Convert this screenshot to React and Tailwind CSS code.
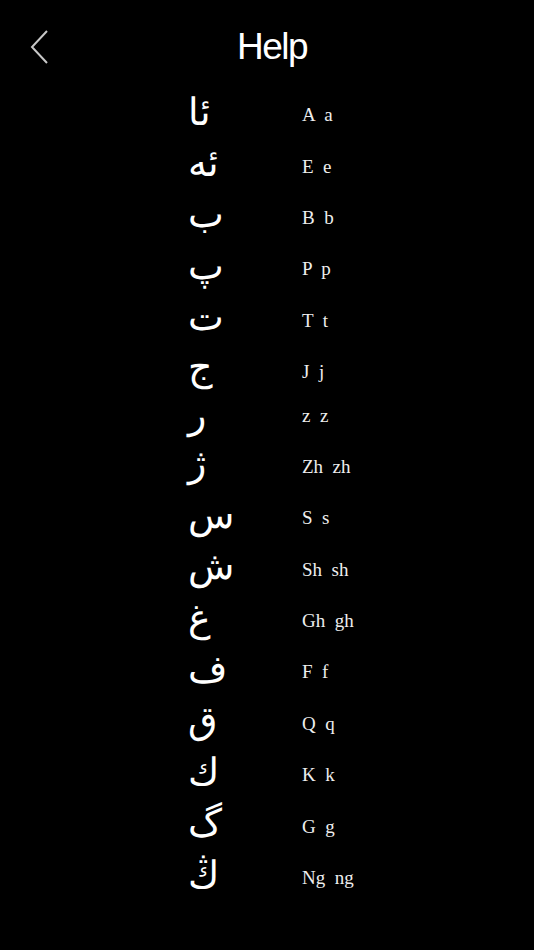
import React from 'react';

const letters = [
  { ug: 'ئا', lat: 'A  a' },
  { ug: 'ئە', lat: 'E  e' },
  { ug: 'ب', lat: 'B  b' },
  { ug: 'پ', lat: 'P  p' },
  { ug: 'ت', lat: 'T  t' },
  { ug: 'ج', lat: 'J  j', lift: '-mt-[14px]' },
  { ug: 'ر', lat: 'z  z', lift: '-mt-[4px]', tight: true },
  { ug: 'ژ', lat: 'Zh  zh' },
  { ug: 'س', lat: 'S  s' },
  { ug: 'ش', lat: 'Sh  sh' },
  { ug: 'غ', lat: 'Gh  gh' },
  { ug: 'ف', lat: 'F  f' },
  { ug: 'ق', lat: 'Q  q' },
  { ug: 'ك', lat: 'K  k' },
  { ug: 'گ', lat: 'G  g' },
  { ug: 'ڭ', lat: 'Ng  ng' },
];

const Help = () => {
  return (
    <div className="w-[534px] h-[950px] bg-black text-white overflow-hidden">
      {/* header */}
      <div className="h-[89px] flex items-center relative pt-[4px]">
        <button className="ml-[28px] w-[22px] h-[36px] flex items-center justify-center">
          <svg width="20" height="36" viewBox="0 0 20 36" fill="none">
            <polyline points="18,2 3,18 18,34" stroke="#c8c8c8" strokeWidth="2" strokeLinejoin="miter" />
          </svg>
        </button>
        <h1 className="flex-1 text-center pr-[40px] text-[37px] font-light tracking-[-1.5px] font-['Liberation_Sans',sans-serif] text-white">
          Help
        </h1>
      </div>

      {/* alphabet list */}
      <div className="flex flex-col">
        {letters.map((l, i) => (
          <div key={i} className={'flex items-center h-[51.4px] ' + (l.tight ? '-mt-[8px]' : '')}>
            <div
              dir="rtl"
              className={
                'w-[114px] ml-[188px] text-left text-[38px] leading-none font-[\'DejaVu_Sans\',sans-serif] ' +
                (l.lift || '-mt-[10px]')
              }
            >
              {l.ug}
            </div>
            <div className="text-[19px] leading-none whitespace-pre text-[#eeeeee] font-['Liberation_Serif',serif]">
              {l.lat}
            </div>
          </div>
        ))}
      </div>
    </div>
  );
};

export default Help;
